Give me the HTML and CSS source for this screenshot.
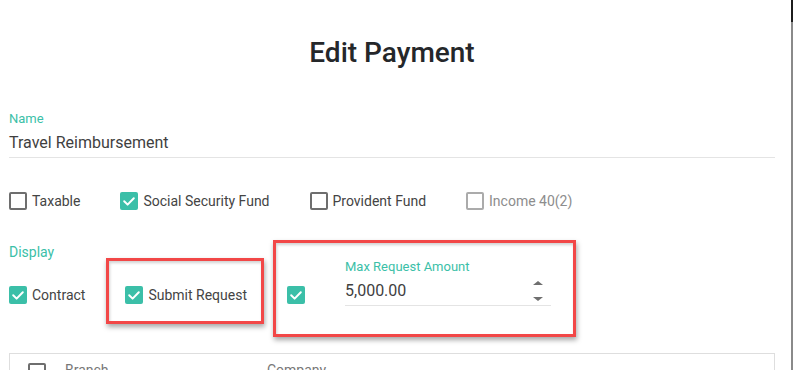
FILE: index.html
```html
<!DOCTYPE html>
<html lang="en">
<head>
<meta charset="utf-8">
<title>Edit Payment</title>
<link rel="stylesheet" href="styles.css">
</head>
<body>
<div class="page">
  <main class="main">
    <h1 class="title">Edit Payment</h1>

    <div class="field name-field">
      <div class="field-label">Name</div>
      <div class="field-value">Travel Reimbursement</div>
    </div>

    <div class="check-row row-one">
      <label class="check">
        <span class="box"></span><span class="check-text">Taxable</span>
      </label>
      <label class="check">
        <span class="box checked"><svg viewBox="0 0 18 18" width="18" height="18"><path d="M4.2 9.3 L7.6 12.6 L13.8 6.2" fill="none" stroke="#fff" stroke-width="2" stroke-linecap="round" stroke-linejoin="round"/></svg></span><span class="check-text">Social Security Fund</span>
      </label>
      <label class="check">
        <span class="box"></span><span class="check-text">Provident Fund</span>
      </label>
      <label class="check disabled">
        <span class="box"></span><span class="check-text">Income 40(2)</span>
      </label>
    </div>

    <div class="section-label">Display</div>

    <div class="check-row row-two">
      <label class="check low">
        <span class="box checked"><svg viewBox="0 0 18 18" width="18" height="18"><path d="M4.2 9.3 L7.6 12.6 L13.8 6.2" fill="none" stroke="#fff" stroke-width="2" stroke-linecap="round" stroke-linejoin="round"/></svg></span><span class="check-text">Contract</span>
      </label>
      <label class="check low">
        <span class="box checked"><svg viewBox="0 0 18 18" width="18" height="18"><path d="M4.2 9.3 L7.6 12.6 L13.8 6.2" fill="none" stroke="#fff" stroke-width="2" stroke-linecap="round" stroke-linejoin="round"/></svg></span><span class="check-text">Submit Request</span>
      </label>
      <label class="check low">
        <span class="box checked"><svg viewBox="0 0 18 18" width="18" height="18"><path d="M4.2 9.3 L7.6 12.6 L13.8 6.2" fill="none" stroke="#fff" stroke-width="2" stroke-linecap="round" stroke-linejoin="round"/></svg></span>
      </label>
      <div class="field amount-field">
        <div class="field-label tight">Max Request Amount</div>
        <div class="field-value number">
          <span>5,000.00</span>
          <span class="spinner"><span class="tri up"></span><span class="tri down"></span></span>
        </div>
      </div>

      <div class="mark mark-one"></div>
      <div class="mark mark-two"></div>
    </div>

    <div class="table">
      <div class="thead">
        <span class="box head-box"></span>
        <span class="th branch">Branch</span>
        <span class="th">Company</span>
      </div>
    </div>
  </main>
  <div class="rail"></div>
</div>
</body>
</html>
```

FILE: styles.css
```css
* { box-sizing: border-box; }

html, body {
  margin: 0;
  padding: 0;
  background: #fff;
  overflow: hidden;
}

body {
  font-family: Roboto, "Noto Sans", "Liberation Sans", sans-serif;
  color: #444;
}

.page {
  display: flex;
  height: 370px;
}

.main {
  flex: 1;
  padding: 0 16px 0 9px;
  min-width: 0;
}

.rail {
  width: 2px;
  background: linear-gradient(#1c1c1c 0 22px, #8a8a8a 22px 100%);
}

.title {
  margin: 37px 0 0;
  font-size: 28px;
  line-height: 32px;
  font-weight: 500;
  text-align: center;
  color: #25272a;
}

.field-label {
  font-size: 13px;
  line-height: 16px;
  color: #3bbfa8;
}

.field-label.tight {
  line-height: 13px;
}

.field-value {
  font-size: 16px;
  line-height: 20px;
  color: #3f3f3f;
  padding-bottom: 4px;
  border-bottom: 1px solid #e4e4e4;
}

.name-field {
  margin-top: 42px;
}

.name-field .field-value {
  margin-top: 6px;
}

.check-row {
  display: flex;
  gap: 40px;
}

.row-one {
  margin-top: 34px;
  align-items: center;
}

.check {
  display: flex;
  align-items: center;
  gap: 5px;
  font-size: 14px;
  line-height: 18px;
  color: #444;
  height: 18px;
}

.check.disabled { color: #8d8d8d; }

.box {
  width: 18px;
  height: 18px;
  flex: 0 0 18px;
  border: 2px solid #6e6e6e;
  border-radius: 2px;
  display: inline-block;
}

.check.disabled .box { border-color: #ababab; }

.box.checked {
  border: none;
  background: #3bbfa8;
}

.box svg { display: block; }

.section-label {
  margin-top: 35px;
  font-size: 14px;
  line-height: 15px;
  color: #3bbfa8;
}

.row-two {
  position: relative;
  margin-top: 0;
  align-items: flex-start;
}

.check.low { margin-top: 26px; }

.amount-field {
  width: 206px;
}

.amount-field .field-value {
  margin-top: 8px;
}

.number {
  display: flex;
  align-items: center;
  justify-content: space-between;
}

.spinner {
  height: 20px;
  margin-right: 8px;
  display: flex;
  flex-direction: column;
  justify-content: space-between;
}

.tri {
  width: 0;
  height: 0;
  border-left: 5px solid transparent;
  border-right: 5px solid transparent;
}

.tri.up { border-bottom: 4px solid #6f6f6f; }
.tri.down { border-top: 4px solid #6f6f6f; }

.mark {
  position: absolute;
  border: 3px solid #f24747;
  box-shadow: 1px 3px 5px rgba(0, 0, 0, 0.35), inset 1px 2px 3px rgba(0, 0, 0, 0.18);
  pointer-events: none;
}

.mark-one {
  left: 97px;
  top: -2px;
  width: 158px;
  height: 66px;
}

.mark-two {
  left: 264px;
  top: -20px;
  width: 303px;
  height: 97px;
}

.table {
  margin-top: 47px;
  border: 1px solid #dedede;
  height: 40px;
}

.thead {
  display: flex;
  align-items: flex-start;
  padding: 9px 0 0 18px;
}

.head-box { margin-right: 19px; }

.th {
  font-size: 14px;
  line-height: 18px;
  color: #777;
  margin-top: -2px;
}

.th.branch { width: 202px; }
```
